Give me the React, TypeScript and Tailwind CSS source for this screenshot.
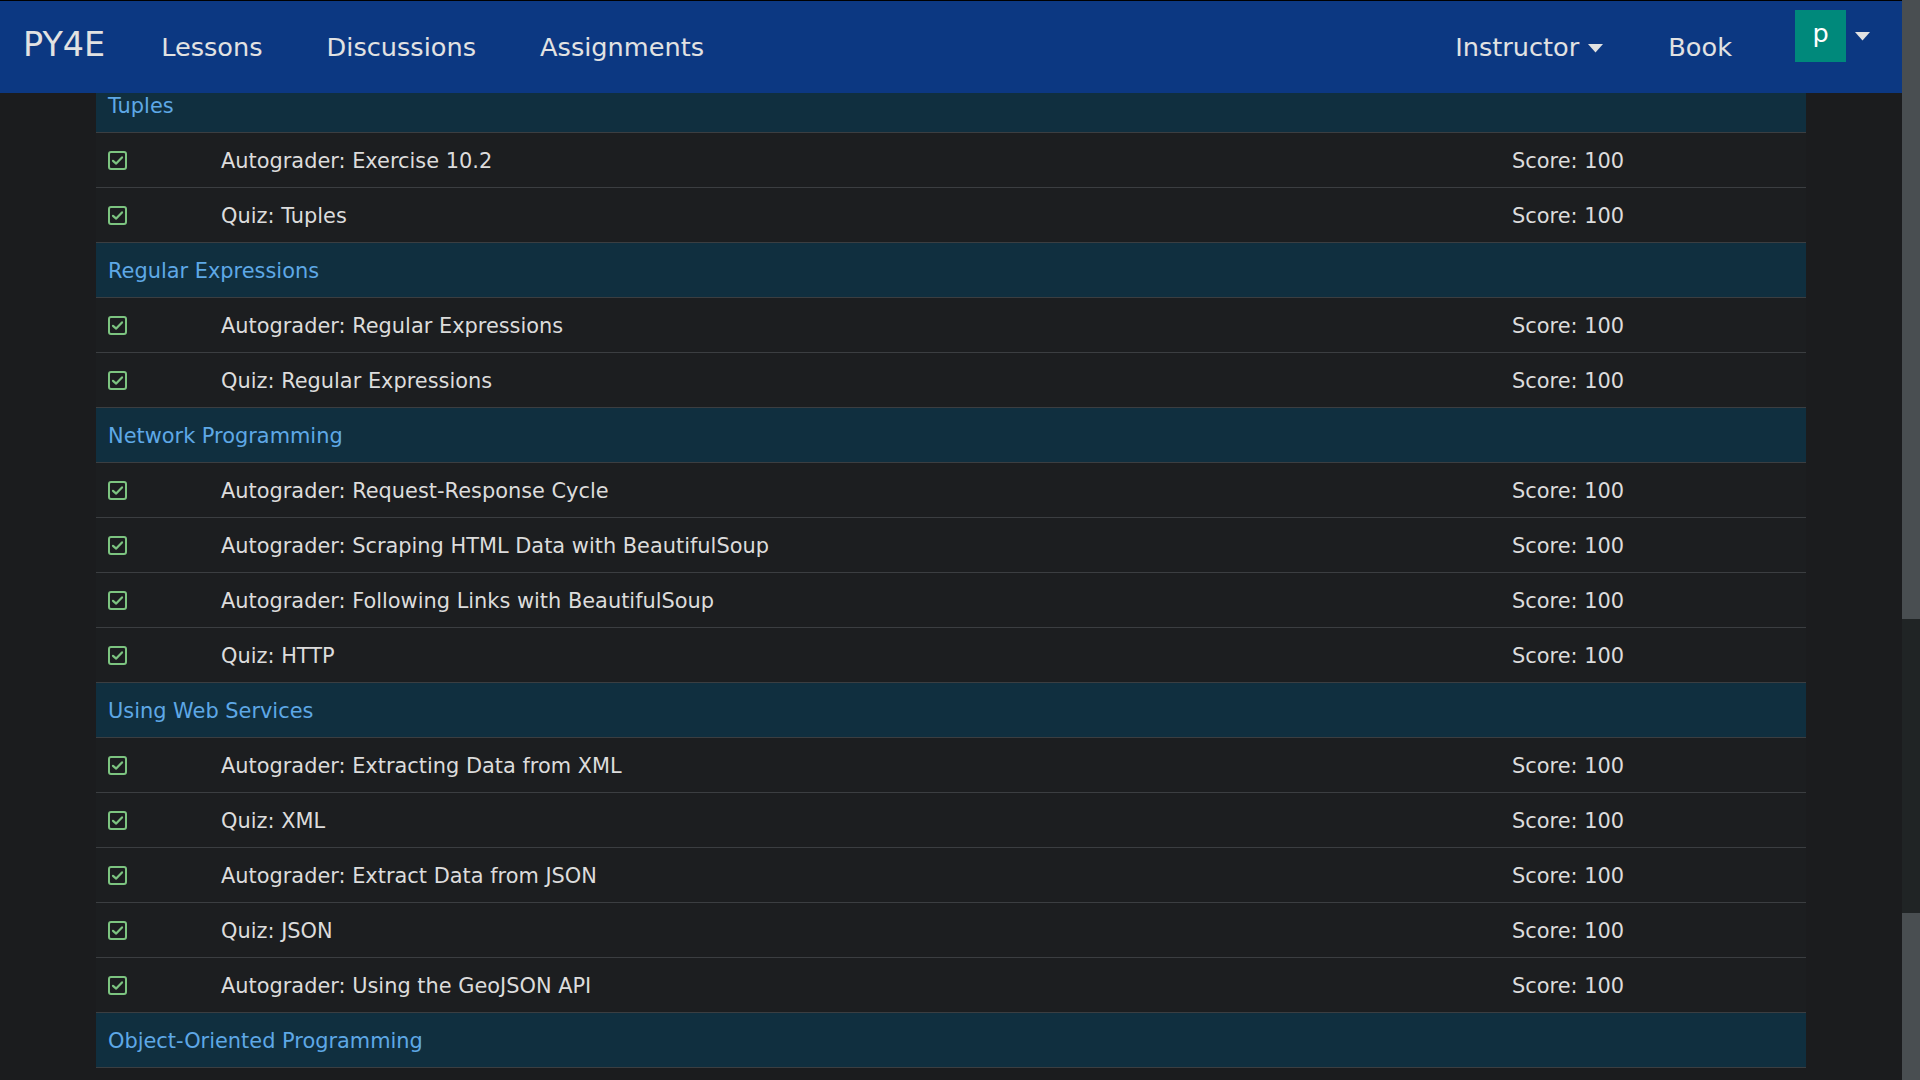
import React from "react";

type Row =
  | { kind: "header"; title: string }
  | { kind: "item"; title: string; score: number };

const rows: Row[] = [
  { kind: "header", title: "Tuples" },
  { kind: "item", title: "Autograder: Exercise 10.2", score: 100 },
  { kind: "item", title: "Quiz: Tuples", score: 100 },
  { kind: "header", title: "Regular Expressions" },
  { kind: "item", title: "Autograder: Regular Expressions", score: 100 },
  { kind: "item", title: "Quiz: Regular Expressions", score: 100 },
  { kind: "header", title: "Network Programming" },
  { kind: "item", title: "Autograder: Request-Response Cycle", score: 100 },
  { kind: "item", title: "Autograder: Scraping HTML Data with BeautifulSoup", score: 100 },
  { kind: "item", title: "Autograder: Following Links with BeautifulSoup", score: 100 },
  { kind: "item", title: "Quiz: HTTP", score: 100 },
  { kind: "header", title: "Using Web Services" },
  { kind: "item", title: "Autograder: Extracting Data from XML", score: 100 },
  { kind: "item", title: "Quiz: XML", score: 100 },
  { kind: "item", title: "Autograder: Extract Data from JSON", score: 100 },
  { kind: "item", title: "Quiz: JSON", score: 100 },
  { kind: "item", title: "Autograder: Using the GeoJSON API", score: 100 },
  { kind: "header", title: "Object-Oriented Programming" },
];

function CheckSquare() {
  return (
    <svg width="19" height="19" viewBox="0 0 19 19" fill="none" className="block">
      <rect x="1" y="1" width="17" height="17" rx="2" stroke="#7cc480" strokeWidth="2" />
      <path d="M5 9.8 L8.2 12.6 L14 6.4" stroke="#7cc480" strokeWidth="2.2" strokeLinecap="round" strokeLinejoin="round" />
    </svg>
  );
}

function Caret({ className }: { className?: string }) {
  return (
    <svg width="15" height="9" viewBox="0 0 15 9" className={className}>
      <path d="M0 0 L15 0 L7.5 8.5 Z" fill="#e2e2e2" />
    </svg>
  );
}

export default function App() {
  return (
    <div
      className="flex h-screen w-full overflow-hidden bg-[#1b1c1e]"
      style={{ fontFamily: '"DejaVu Sans", Verdana, sans-serif' }}
    >
      <div className="flex min-w-0 flex-1 flex-col">
        <nav className="flex h-[93px] shrink-0 items-center border-t border-black bg-[#0c3882] pt-[2px] text-[25.6px] text-[#e2e2e2]">
          <a className="ml-[23px] mr-[56px] mb-[6px] text-[33.4px] leading-none">PY4E</a>
          <a className="mr-[64px] leading-none">Lessons</a>
          <a className="mr-[64px] leading-none">Discussions</a>
          <a className="leading-none">Assignments</a>
          <div className="flex-1" />
          <a className="flex items-center gap-[9px] leading-none">
            Instructor
            <Caret />
          </a>
          <a className="ml-[65px] leading-none">Book</a>
          <div className="ml-[63px] mr-[32px] flex items-start gap-[9px] self-start pt-[7px]">
            <div className="flex h-[52px] w-[51px] items-center justify-center bg-[#00897b] pb-[6px] text-white">
              p
            </div>
            <Caret className="mt-[22px]" />
          </div>
        </nav>
        <main className="min-h-0 flex-1 overflow-hidden">
          <div className="mx-auto -mt-[16px] w-[1710px] border-b border-[#3b3e41]">
            {rows.map((r, i) =>
              r.kind === "header" ? (
                <div
                  key={i}
                  className="flex h-[55px] items-center border-t border-[#3b3e41] bg-[#102f3f] px-[12px] pt-[4px] text-[20.9px] text-[#5ea8e6]"
                >
                  {r.title}
                </div>
              ) : (
                <div
                  key={i}
                  className="grid h-[55px] grid-cols-[113px_1fr_306px] items-center border-t border-[#3b3e41] bg-[#1c1e20] text-[20.9px] text-[#dcdcdc]"
                >
                  <div className="px-3">
                    <CheckSquare />
                  </div>
                  <div className="px-3 pt-[4px]">{r.title}</div>
                  <div className="px-3 pt-[4px]">Score: {r.score}</div>
                </div>
              )
            )}
          </div>
        </main>
      </div>
      <div className="flex w-[18px] shrink-0 flex-col">
        <div className="h-[619px] bg-[#494e51]" />
        <div className="h-[294px] bg-[#202425]" />
        <div className="flex-1 bg-[#494e51]" />
      </div>
    </div>
  );
}
